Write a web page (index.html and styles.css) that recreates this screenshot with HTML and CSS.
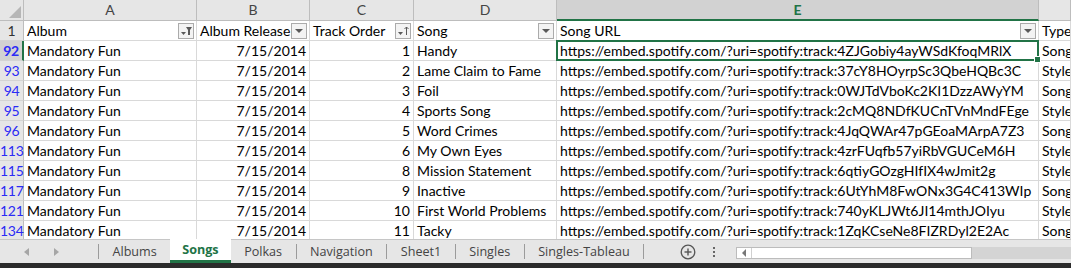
FILE: index.html
```html
<!DOCTYPE html>
<html>
<head>
<meta charset="utf-8">
<link rel="stylesheet" href="styles.css">
</head>
<body>
<div class="app">
  <div class="sheet">
    <!-- column headers -->
    <div class="ch corner"><svg width="12" height="12" viewBox="0 0 12 12"><polygon points="12,0 12,12 0,12" fill="#b6b6b6"/></svg></div>
    <div class="ch">A</div>
    <div class="ch">B</div>
    <div class="ch">C</div>
    <div class="ch">D</div>
    <div class="ch ch-sel">E</div>
    <div class="ch"></div>

    <!-- row 1 -->
    <div class="rh rh-plain">1</div>
    <div class="c hdr"><span>Album</span><span class="fb"><svg width="14" height="14" viewBox="0 0 14 14"><polygon points="2,8 7,8 4.5,11" fill="#595959"/><polygon points="7,3 13,3 11,6 11,11 9,11 9,6" fill="#595959"/></svg></span></div>
    <div class="c hdr"><span>Album Release</span><span class="fb"><svg width="14" height="14" viewBox="0 0 14 14"><polygon points="3,5 11,5 7,9" fill="#595959"/></svg></span></div>
    <div class="c hdr"><span>Track Order</span><span class="fb"><svg width="14" height="14" viewBox="0 0 14 14"><polygon points="2,8 7,8 4.5,11" fill="#595959"/><line x1="10.5" y1="3" x2="10.5" y2="11" stroke="#595959" stroke-width="1"/><polyline points="8.5,5 10.5,3 12.5,5" fill="none" stroke="#595959" stroke-width="1"/></svg></span></div>
    <div class="c hdr"><span>Song</span><span class="fb"><svg width="14" height="14" viewBox="0 0 14 14"><polygon points="3,5 11,5 7,9" fill="#595959"/></svg></span></div>
    <div class="c hdr"><span>Song URL</span><span class="fb"><svg width="14" height="14" viewBox="0 0 14 14"><polygon points="3,5 11,5 7,9" fill="#595959"/></svg></span></div>
    <div class="c hdr"><span>Type</span></div>

    <div class="rh rh-sel">92</div>
    <div class="c">Mandatory Fun</div><div class="c r">7/15/2014</div><div class="c r">1</div><div class="c">Handy</div><div class="c sel">https://embed.spotify.com/?uri=spotify:track:4ZJGobiy4ayWSdKfoqMRlX</div><div class="c">Song</div>

    <div class="rh">93</div>
    <div class="c">Mandatory Fun</div><div class="c r">7/15/2014</div><div class="c r">2</div><div class="c">Lame Claim to Fame</div><div class="c">https://embed.spotify.com/?uri=spotify:track:37cY8HOyrpSc3QbeHQBc3C</div><div class="c">Style</div>

    <div class="rh">94</div>
    <div class="c">Mandatory Fun</div><div class="c r">7/15/2014</div><div class="c r">3</div><div class="c">Foil</div><div class="c">https://embed.spotify.com/?uri=spotify:track:0WJTdVboKc2KI1DzzAWyYM</div><div class="c">Song</div>

    <div class="rh">95</div>
    <div class="c">Mandatory Fun</div><div class="c r">7/15/2014</div><div class="c r">4</div><div class="c">Sports Song</div><div class="c">https://embed.spotify.com/?uri=spotify:track:2cMQ8NDfKUCnTVnMndFEge</div><div class="c">Style</div>

    <div class="rh">96</div>
    <div class="c">Mandatory Fun</div><div class="c r">7/15/2014</div><div class="c r">5</div><div class="c">Word Crimes</div><div class="c">https://embed.spotify.com/?uri=spotify:track:4JqQWAr47pGEoaMArpA7Z3</div><div class="c">Song</div>

    <div class="rh">113</div>
    <div class="c">Mandatory Fun</div><div class="c r">7/15/2014</div><div class="c r">6</div><div class="c">My Own Eyes</div><div class="c">https://embed.spotify.com/?uri=spotify:track:4zrFUqfb57yiRbVGUCeM6H</div><div class="c">Style</div>

    <div class="rh">115</div>
    <div class="c">Mandatory Fun</div><div class="c r">7/15/2014</div><div class="c r">8</div><div class="c">Mission Statement</div><div class="c">https://embed.spotify.com/?uri=spotify:track:6qtiyGOzgHIfIX4wJmit2g</div><div class="c">Style</div>

    <div class="rh">117</div>
    <div class="c">Mandatory Fun</div><div class="c r">7/15/2014</div><div class="c r">9</div><div class="c">Inactive</div><div class="c">https://embed.spotify.com/?uri=spotify:track:6UtYhM8FwONx3G4C413WIp</div><div class="c">Song</div>

    <div class="rh">121</div>
    <div class="c">Mandatory Fun</div><div class="c r">7/15/2014</div><div class="c r">10</div><div class="c">First World Problems</div><div class="c">https://embed.spotify.com/?uri=spotify:track:740yKLJWt6JI14mthJOIyu</div><div class="c">Style</div>

    <div class="rh">134</div>
    <div class="c">Mandatory Fun</div><div class="c r">7/15/2014</div><div class="c r">11</div><div class="c">Tacky</div><div class="c">https://embed.spotify.com/?uri=spotify:track:1ZqKCseNe8FIZRDyl2E2Ac</div><div class="c">Song</div>
  </div>

  <div class="tabbar">
    <div class="nav">
      <svg width="8" height="10" viewBox="0 0 8 10"><polygon points="6,1 6,9 1,5" fill="#a6a6a6"/></svg>
      <svg width="8" height="10" viewBox="0 0 8 10"><polygon points="2,1 2,9 7,5" fill="#a6a6a6"/></svg>
    </div>
    <div class="tabs">
      <div class="tab">Albums</div>
      <div class="tab active">Songs</div>
      <div class="tab">Polkas</div>
      <div class="tab">Navigation</div>
      <div class="tab">Sheet1</div>
      <div class="tab">Singles</div>
      <div class="tab">Singles-Tableau</div>
    </div>
    <div class="add"><svg width="16" height="16" viewBox="0 0 16 16"><circle cx="8" cy="8" r="6.8" fill="none" stroke="#555" stroke-width="1.3"/><line x1="8" y1="4.5" x2="8" y2="11.5" stroke="#555" stroke-width="1.4"/><line x1="4.5" y1="8" x2="11.5" y2="8" stroke="#555" stroke-width="1.4"/></svg></div>
    <div class="more"><svg width="4" height="14" viewBox="0 0 4 14"><rect x="1" y="2" width="2" height="2" fill="#666"/><rect x="1" y="6" width="2" height="2" fill="#666"/><rect x="1" y="10" width="2" height="2" fill="#666"/></svg></div>
    <div class="hscroll">
      <div class="thumb">
        <span class="larrow"><svg width="6" height="8" viewBox="0 0 6 8"><polygon points="5,0 5,8 1,4" fill="#777"/></svg></span>
      </div>
    </div>
  </div>
  <div class="bottom"></div>
</div>
</body>
</html>
```

FILE: styles.css
```css
* { box-sizing: border-box; }
html, body { margin: 0; padding: 0; background: #fff; }
body { width: 1071px; height: 268px; overflow: hidden; font-family: "Lato", "Liberation Sans", sans-serif; }

.app { width: 1071px; height: 268px; display: flex; flex-direction: column; }

.sheet {
  height: 239px;
  overflow: hidden;
  display: grid;
  grid-template-columns: 24px 173px 113px 104px 143px 482px 32px;
  grid-template-rows: 21px;
  grid-auto-rows: 20px;
  font-size: 14px;
  color: #000;
}

.ch {
  background: #e6e6e6;
  border-right: 1px solid #bdbdbd;
  border-bottom: 1px solid #bdbdbd;
  color: #444;
  font-size: 14px;
  text-align: center;
  line-height: 20px;
}
.corner { display: flex; align-items: flex-end; justify-content: flex-end; padding: 0 2px 2px 0; }
.corner svg { display: block; }
.ch-sel {
  background: #d2d2d2;
  color: #217346;
  font-weight: bold;
  border-bottom: 2px solid #217346;
  line-height: 19px;
}

.rh {
  background: #e6e6e6;
  border-right: 1px solid #bdbdbd;
  border-bottom: 1px solid #d4d4d4;
  color: #2b2bf5;
  text-align: center;
  font-size: 14px;
  line-height: 20px;
  white-space: nowrap;
  letter-spacing: -0.3px;
}
.rh-plain { color: #333; }
.rh-sel {
  background: #d2d2d2;
  font-weight: bold;
  border-right: 2px solid #217346;
}

.c {
  border-right: 1px solid #d9d9d9;
  border-bottom: 1px solid #d9d9d9;
  padding: 0 3px;
  line-height: 20px;
  white-space: nowrap;
  overflow: hidden;
}
.c.r { text-align: right; }
.hdr { display: flex; align-items: center; justify-content: space-between; padding-right: 2px; }
.fb {
  width: 16px; height: 16px;
  flex: none;
  border: 1px solid #ababab;
  background: #f3f3f3;
  display: flex; align-items: center; justify-content: center;
}
.fb svg { display: block; }

.sel { position: relative; overflow: visible; }
.sel::after {
  content: "";
  position: absolute;
  left: -1px; top: -1px; right: -1px; bottom: -1px;
  border: 2px solid #217346;
  pointer-events: none;
}
.sel::before {
  content: "";
  position: absolute;
  right: -3px; bottom: -3px;
  width: 5px; height: 5px;
  background: #217346;
  border: 1px solid #fff;
  box-sizing: content-box;
  z-index: 2;
}

.tabbar {
  height: 24px;
  background: #e6e6e6;
  border-top: 1px solid #c6c6c6;
  display: flex;
  align-items: stretch;
  font-family: "Open Sans", "Liberation Sans", sans-serif;
  font-size: 12.6px;
  color: #444;
}
.nav { width: 99px; display: flex; align-items: center; padding-left: 23px; gap: 21px; border-right: 1px solid #9b9b9b; margin: 4px 0; }
.tabs { display: flex; align-items: stretch; }
.tab {
  padding: 0 13.5px;
  display: flex; align-items: center;
  border-right: 1px solid #9b9b9b;
  margin: 4px 0;
}
.tab.active {
  background: #fff;
  color: #217346;
  font-weight: bold;
  margin: -1px 0 0 -1px;
  padding: 0 12px 0 12px;
  border-right: none;
  border-bottom: 3px solid #217346;
  border-left: none;
}
.add { width: 36px; display: flex; align-items: center; justify-content: center; margin-left: 26px; }
.more { width: 16px; display: flex; align-items: center; justify-content: center; margin-left: 0; }
.hscroll {
  flex: 1;
  margin: 7px 0 4px 14px;
  background: #d4d4d4;
  display: flex;
}
.thumb {
  width: 236px;
  background: #fff;
  border: 1px solid #bcbcbc;
  display: flex;
}
.larrow { width: 15px; border-right: 1px solid #d0d0d0; display: flex; align-items: center; justify-content: center; }
.bottom { flex: 1; background: #2b2b2b; }
```
